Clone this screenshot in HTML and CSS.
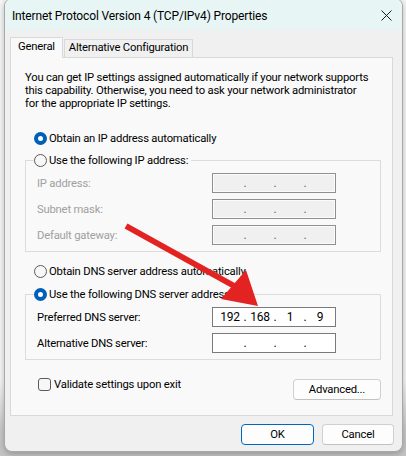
FILE: index.html
```html
<!DOCTYPE html>
<html>
<head>
<meta charset="utf-8">
<link rel="stylesheet" href="styles.css">
</head>
<body>
<div class="screen">
  <div class="window">
    <div class="titlebar">
      <span class="title">Internet Protocol Version 4 (TCP/IPv4) Properties</span>
      <svg class="close" width="11" height="11" viewBox="0 0 11 11"><path d="M0.5 0.5L10.5 10.5M10.5 0.5L0.5 10.5" stroke="#1a1a1a" stroke-width="1" fill="none"/></svg>
    </div>
    <div class="body">
      <div class="tabs">
        <div class="tab active">General</div>
        <div class="tab">Alternative Configuration</div>
      </div>
      <div class="panel">
        <p class="intro">You can get IP settings assigned automatically if your network supports<br>this capability. Otherwise, you need to ask your network administrator<br>for the appropriate IP settings.</p>
        <div class="option first"><span class="radio checked"></span>Obtain an IP address automatically</div>
        <fieldset class="group">
          <legend class="option"><span class="radio"></span>Use the following IP address:</legend>
          <div class="field disabled"><span class="lbl">IP address:</span><div class="ipbox"><span class="seg"></span><span class="dot">.</span><span class="seg"></span><span class="dot">.</span><span class="seg"></span><span class="dot">.</span><span class="seg"></span></div></div>
          <div class="field disabled"><span class="lbl">Subnet mask:</span><div class="ipbox"><span class="seg"></span><span class="dot">.</span><span class="seg"></span><span class="dot">.</span><span class="seg"></span><span class="dot">.</span><span class="seg"></span></div></div>
          <div class="field disabled"><span class="lbl">Default gateway:</span><div class="ipbox"><span class="seg"></span><span class="dot">.</span><span class="seg"></span><span class="dot">.</span><span class="seg"></span><span class="dot">.</span><span class="seg"></span></div></div>
        </fieldset>
        <div class="option dns-auto"><span class="radio"></span>Obtain DNS server address automatically</div>
        <fieldset class="group dns">
          <legend class="option"><span class="radio checked"></span>Use the following DNS server addresses:</legend>
          <div class="field"><span class="lbl">Preferred DNS server:</span><div class="ipbox"><span class="seg">192</span><span class="dot">.</span><span class="seg">168</span><span class="dot">.</span><span class="seg">1</span><span class="dot">.</span><span class="seg">9</span></div></div>
          <div class="field"><span class="lbl">Alternative DNS server:</span><div class="ipbox"><span class="seg"></span><span class="dot">.</span><span class="seg"></span><span class="dot">.</span><span class="seg"></span><span class="dot">.</span><span class="seg"></span></div></div>
        </fieldset>
        <div class="bottom-row">
          <div class="check"><span class="checkbox"></span>Validate settings upon exit</div>
          <button class="btn adv">Advanced...</button>
        </div>
      </div>
      <div class="actions">
        <button class="btn ok">OK</button>
        <button class="btn cancel">Cancel</button>
      </div>
    </div>
  </div>
  <svg class="arrow" width="406" height="456" viewBox="0 0 406 456">
    <line x1="126" y1="226" x2="236" y2="287" stroke="#e32222" stroke-width="6"/>
    <polygon points="221,299 246,270 258,306" fill="#e32222"/>
  </svg>
</div>
</body>
</html>
```

FILE: styles.css
```css
* { box-sizing: border-box; }

body {
  margin: 0;
  font-family: Roboto, "Noto Sans", sans-serif;
  font-size: 11.25px;
  letter-spacing: -0.2px;
  color: #000;
}

.screen {
  position: relative;
  width: 406px;
  height: 456px;
  overflow: hidden;
  padding-left: 4px;
  background: linear-gradient(#f6f6f6 0, #f6f6f6 380px, #c9c9c9 430px, #c4c4c4 456px);
}

.window {
  width: 399px;
  height: 454px;
  margin-top: -2px;
  border: 1px solid #a8a8a8;
  border-radius: 8px;
  background: #f0f0f0;
  display: flex;
  flex-direction: column;
  overflow: hidden;
  box-shadow: 0 2px 6px rgba(0, 0, 0, 0.25);
}

.titlebar {
  height: 31px;
  flex: none;
  background: #e7f5f5;
  display: flex;
  align-items: center;
  justify-content: space-between;
  padding: 2px 10px 0 7px;
  line-height: 16px;
  white-space: nowrap;
  font-size: 12px;
  letter-spacing: -0.15px;
}

.close { display: block; }

.body {
  flex: 1;
  display: flex;
  flex-direction: column;
  padding: 7px 9px 0 5px;
}

.tabs {
  display: flex;
  align-items: flex-end;
  height: 20px;
  white-space: nowrap;
}

.tab {
  height: 18px;
  padding: 0 4px;
  border: 1px solid #d9d9d9;
  border-bottom: none;
  background: #f0f0f0;
  line-height: 16px;
  margin-left: 1px;
}

.tab.active {
  position: relative;
  z-index: 1;
  height: 21px;
  margin-bottom: -1px;
  margin-left: 0;
  padding: 0 7px;
  background: #f9f9f9;
  line-height: 18px;
}

.panel {
  height: 359px;
  border: 1px solid #d9d9d9;
  background: #f9f9f9;
  padding: 13px 11px 0 14px;
  display: flex;
  flex-direction: column;
}

.intro {
  margin: 0;
  line-height: 13px;
  white-space: nowrap;
}

.option {
  display: flex;
  align-items: center;
  height: 20px;
  white-space: nowrap;
}

.option.first {
  margin-top: 18px;
  margin-left: 9px;
}

.radio {
  width: 13px;
  height: 13px;
  border-radius: 50%;
  border: 1px solid #5b5b5b;
  background: #f7f7f7;
  margin-right: 2px;
  flex: none;
}

.radio.checked {
  border: 4px solid #005fb8;
  background: #fff;
}

.group {
  margin: 2px 0 0 0;
  padding: 0 0 6px 0;
  border: 1px solid #dcdcdc;
  min-width: 0;
}

.group legend {
  padding: 0 3px 0 0;
  margin-left: 8px;
  background: #f9f9f9;
}

.field {
  display: flex;
  align-items: center;
  height: 20px;
  margin-top: 6px;
  padding-left: 11px;
  white-space: nowrap;
}

.field:first-of-type { margin-top: 3px; }

.lbl { width: 175px; flex: none; }

.field.disabled .lbl { color: #a0a0a0; }

.ipbox {
  width: 124px;
  height: 20px;
  border: 1px solid #7a7a7a;
  background: #fff;
  display: flex;
  align-items: center;
  padding-left: 5px;
  line-height: 16px;
  font-size: 12px;
}

.field.disabled .ipbox {
  border-color: #8f8f8f;
  background: #f0f0f0;
  box-shadow: inset 0 0 0 1px #fbfbfb;
}

.seg { width: 24px; text-align: center; }

.dot { width: 6px; text-align: center; }

.field.disabled .dot { color: #5a6a7a; }

.option.dns-auto { margin-top: 9px; margin-left: 9px; }

.group.dns { margin-top: 3px; }

.bottom-row {
  display: flex;
  justify-content: space-between;
  align-items: flex-start;
  margin-top: 19px;
}

.check {
  display: flex;
  align-items: center;
  margin-left: 13px;
  margin-top: -1px;
  white-space: nowrap;
}

.checkbox {
  width: 13px;
  height: 13px;
  border: 1px solid #5b5b5b;
  border-radius: 3px;
  background: #f7f7f7;
  margin-right: 3px;
}

.btn {
  font: inherit;
  letter-spacing: inherit;
  color: #000;
  height: 21px;
  border: 1px solid #d0d0d0;
  border-bottom-color: #c2c2c2;
  border-radius: 4px;
  background: #fdfdfd;
  padding: 0;
}

.btn.adv { width: 88px; }

.actions {
  display: flex;
  justify-content: flex-end;
  gap: 8px;
  margin-top: 8px;
  margin-right: -1px;
}

.btn.ok { width: 73px; border: 1px solid #0067c0; }

.btn.cancel { width: 72px; }

.arrow {
  position: absolute;
  left: 0;
  top: 0;
  pointer-events: none;
}
```
